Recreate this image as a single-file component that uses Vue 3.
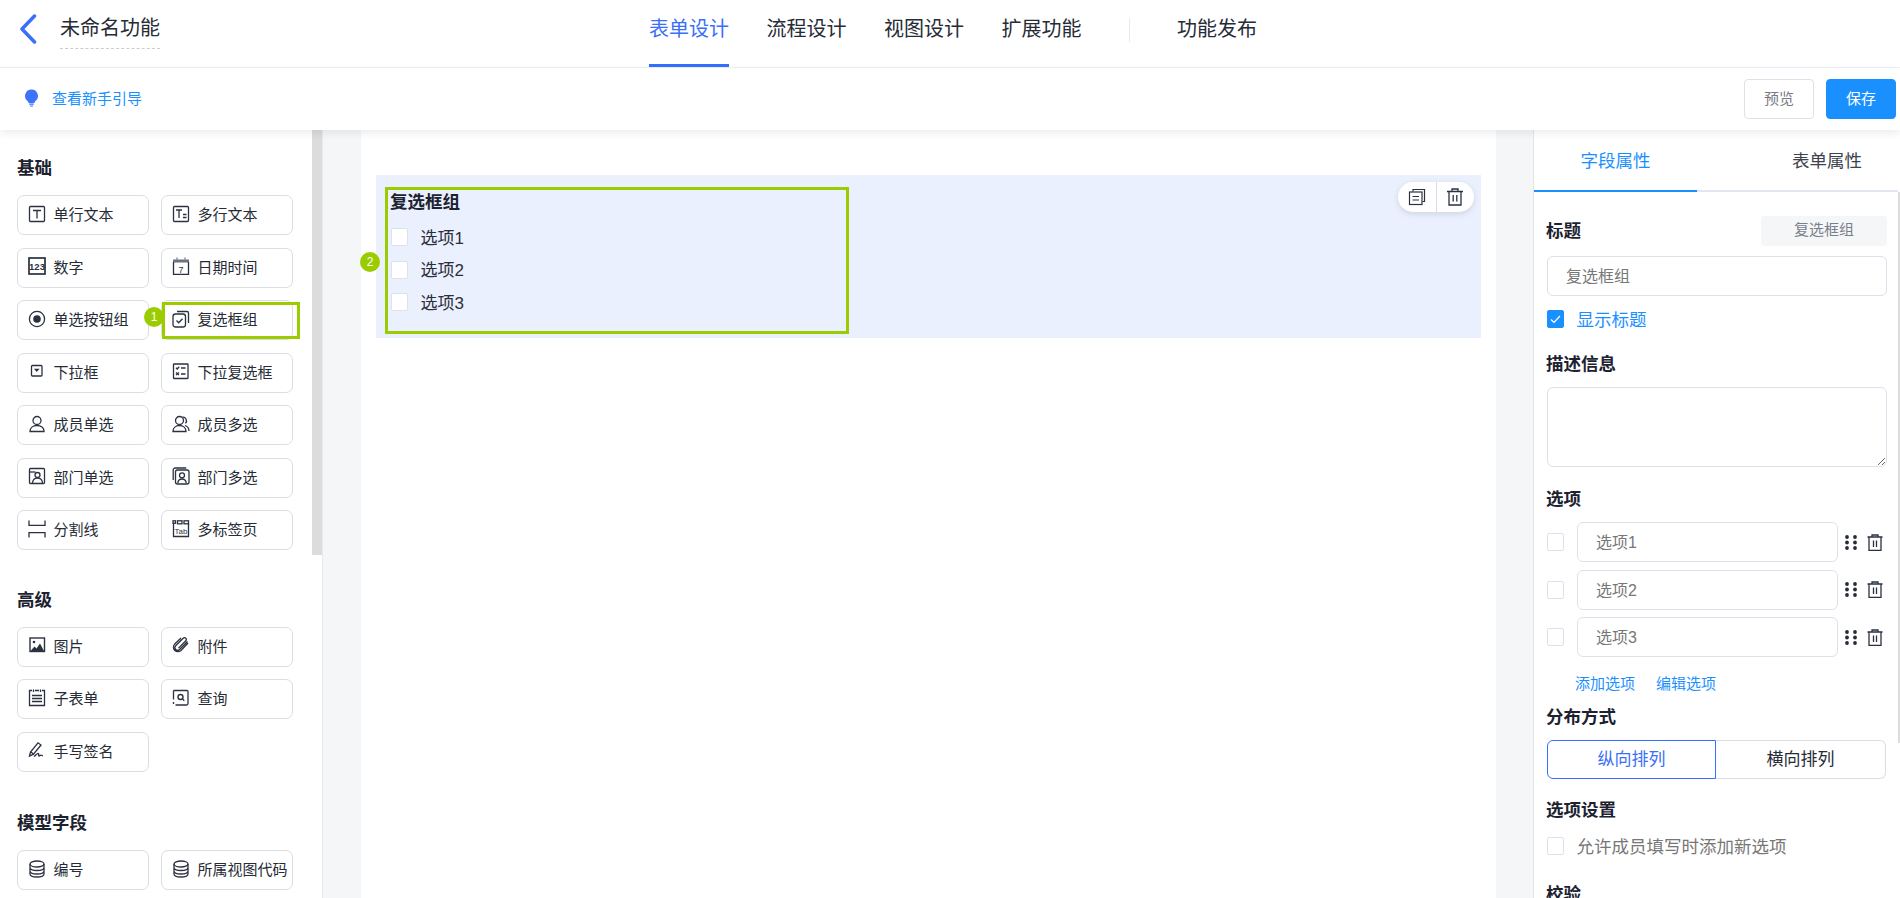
<script setup>
const S = 'fill="none" stroke="#2b3140" stroke-width="1.3"'
const icons = {
  single: `<g ${S}><rect x="1.5" y="1.5" width="15" height="15" rx="1"/><path d="M5 5.5h8M9 5.5v8"/></g>`,
  multi: `<g ${S}><rect x="1.5" y="1.5" width="15" height="15" rx="1"/><path d="M4 5h6M7 5v8M11 9.5h3.5M11 12.5h3.5"/></g>`,
  num: `<rect x="1" y="1" width="16" height="16" fill="none" stroke="#2b3140" stroke-width="1.7"/><text x="9" y="12.6" text-anchor="middle" font-family="Liberation Sans" font-weight="700" font-size="9.5" fill="#2b3140">123</text>`,
  date: `<rect x="1" y="2.5" width="16" height="3" fill="#6b7280"/><path d="M5 .5v2M13 .5v2" stroke="#6b7280" stroke-width="1.2"/><path d="M1.5 5v12.5h15V5" ${S}/><text x="9" y="15.5" text-anchor="middle" font-family="Liberation Sans" font-size="9" fill="#2b3140">7</text>`,
  radio: `<circle cx="9" cy="9" r="7.6" ${S}/><circle cx="9" cy="9" r="3.8" fill="#2b3140"/>`,
  check: `<g ${S}><path d="M5 1.5h10a1.5 1.5 0 0 1 1.5 1.5v10"/><rect x="1" y="4" width="12.5" height="13" rx="2.5"/><path d="M4.5 10.5l2.2 2.2 3.8-4"/></g>`,
  select: `<rect x="3.5" y="3.5" width="10.5" height="10.5" rx="1" ${S}/><path d="M6 6.800h5.600l-2.800 3.200z" fill="#2b3140"/>`,
  mselect: `<g ${S}><rect x="1.5" y="2" width="14.5" height="14.5" rx=".5"/><path d="M4 5.800l1.200 1.200 2-2.200M9 6h4.500M4 10.500l3 2.500M7 10.500l-3 2.500M9 12h4.500"/></g>`,
  user: `<g ${S}><circle cx="9" cy="5.500" r="4"/><path d="M2 16.500c0-3.600 3-6 7-6s7 2.400 7 5.300v.7z"/></g>`,
  users: `<g ${S}><circle cx="7.500" cy="5.500" r="4"/><path d="M1 16.500c0-3.600 2.800-6 6.500-6s6.500 2.400 6.500 6z"/><path d="M10.500 1.800a4 4 0 0 1 3 6.600M13 10.500c2.500 .8 4 2.800 4 5.500"/></g>`,
  dept: `<g ${S}><rect x="1.500" y="1.500" width="15" height="15" rx="1"/><path d="M1.500 5h6"/><circle cx="9.500" cy="8" r="2.500"/><path d="M4.500 16c.3-3 2.300-4.800 5-4.800s4.700 1.800 5 4.800"/></g>`,
  depts: `<g ${S}><path d="M1.200 13V3a2 2 0 0 1 2-2h11"/><rect x="3.500" y="3" width="13.500" height="14" rx="2"/><circle cx="10" cy="8.300" r="2.500"/><path d="M5.800 16c.3-2.500 2-4 4.200-4s3.900 1.500 4.200 4"/></g>`,
  line: `<path d="M1 .5v4.800h16V.5M1 17.500v-4.800h16v4.800" ${S}/>`,
  tab: `<g ${S}><path d="M1.500 3v13.500h15V3"/><rect x="1" y=".8" width="2.500" height="2.500"/><rect x="5.500" y=".8" width="4.500" height="3"/><rect x="12" y=".8" width="4.500" height="3"/></g><text x="9" y="13.500" text-anchor="middle" font-family="Liberation Sans" font-size="8" fill="#2b3140">Tab</text>`,
  image: `<rect x="2" y="2" width="14.500" height="13.500" fill="none" stroke="#2b3140" stroke-width="1.400"/><circle cx="6" cy="6" r="1.300" fill="#2b3140"/><path d="M2.500 15l4-4.500 2 2 3.500-5 4 7.500z" fill="#2b3140"/>`,
  clip: `<path d="M15.500 5.500l-8 8a2.600 2.600 0 0 1-3.800-3.800l7.500-7.500a1.800 1.800 0 0 1 2.600 2.600l-7.300 7.300M16 7l-7 7.500a4.500 4.500 0 0 1-6.500-6.200L9 2" ${S}/>`,
  sub: `<g ${S}><path d="M4 1.500H1.500v15h15v-15H14M7 1.500h4"/><path d="M4 6.500h10M4 9.500h10M4 12.500h10" stroke-width="1.400"/><path d="M5.500 .5v2.500M12.500 .5v2.500"/></g>`,
  query: `<g ${S}><path d="M1.500 1.500h13.500a1 1 0 0 1 1 1v12a1.500 1.500 0 0 1-1.500 1.500H3.500M1.500 1.500v9M1.500 13v2"/><circle cx="8.500" cy="8" r="2.500" stroke-width="1.400"/><path d="M10.500 10l1.800 1.800"/></g>`,
  sign: `<g ${S}><path d="M1.500 15l1-4L10 1.800l3 2.200-7.500 9.200z"/><path d="M3 11l2.500 2M6 15.500c2-1.500 3.500-3.500 4.500-3 .8.400-.5 2.200.3 2.500s1.500-1 2.500-.8c.7.100.8.600 1.700.6"/></g>`,
  db: `<g ${S}><ellipse cx="9" cy="4" rx="7" ry="3"/><path d="M2 4v10c0 1.700 3 3 7 3s7-1.300 7-3V4M2 7.500c0 1.700 3 3 7 3s7-1.300 7-3M2 11c0 1.700 3 3 7 3s7-1.300 7-3"/></g>`
}
const sections = [
  { title: '基础', items: [
    ['single', '单行文本'], ['multi', '多行文本'], ['num', '数字'], ['date', '日期时间'],
    ['radio', '单选按钮组'], ['check', '复选框组'], ['select', '下拉框'], ['mselect', '下拉复选框'],
    ['user', '成员单选'], ['users', '成员多选'], ['dept', '部门单选'], ['depts', '部门多选'],
    ['line', '分割线'], ['tab', '多标签页']
  ] },
  { title: '高级', items: [
    ['image', '图片'], ['clip', '附件'], ['sub', '子表单'], ['query', '查询'], ['sign', '手写签名']
  ] },
  { title: '模型字段', items: [['db', '编号'], ['db', '所属视图代码']] }
]
const navs = ['流程设计', '视图设计', '扩展功能']
const options = ['选项1', '选项2', '选项3']
</script>

<template>
  <div class="app">
    <header class="top">
      <div class="brand">
        <svg class="back" width="18" height="30" viewBox="0 0 18 30"><path d="M15.500 2L3 15l12.500 13" fill="none" stroke="#3a6ff7" stroke-width="3.500" stroke-linecap="round" stroke-linejoin="round"/></svg>
        <span class="name">未命名功能</span>
      </div>
      <nav class="nav">
        <a class="nav-item on">表单设计</a>
        <a v-for="n in navs" :key="n" class="nav-item">{{ n }}</a>
        <i class="nav-sep"></i>
        <a class="nav-item">功能发布</a>
      </nav>
    </header>

    <div class="sub">
      <div class="guide">
        <svg width="15" height="18" viewBox="0 0 15 18"><path d="M7.500 .5a6.500 6.500 0 0 1 4 11.600c-.7.600-1 1.100-1.100 1.900H4.600c-.1-.8-.4-1.300-1.100-1.900A6.500 6.500 0 0 1 7.500 .5z" fill="#3d74fb"/><path d="M5.200 15.200h4.600M6 17h3" stroke="#3d74fb" stroke-width="1.200"/></svg>
        <span>查看新手引导</span>
      </div>
      <div class="actions">
        <button class="btn">预览</button>
        <button class="btn primary">保存</button>
      </div>
    </div>

    <main class="body">
      <aside class="left">
        <div class="left-inner">
          <section v-for="s in sections" :key="s.title" class="group">
            <h3 class="h">{{ s.title }}</h3>
            <div class="grid">
              <div v-for="it in s.items" :key="it[1]" class="item">
                <svg class="ico" width="18" height="18" viewBox="0 0 18 18" v-html="icons[it[0]]"></svg>
                <span>{{ it[1] }}</span>
                <template v-if="it[1] === '复选框组'">
                  <i class="mark-box"></i>
                  <b class="badge badge-one">1</b>
                </template>
              </div>
            </div>
          </section>
        </div>
        <div class="track"><div class="thumb"></div></div>
      </aside>

      <section class="center">
        <div class="canvas">
          <div class="field">
            <div class="field-title">复选框组</div>
            <label v-for="o in options" :key="o" class="opt">
              <i class="box"></i><span class="opt-text">{{ o }}</span>
            </label>
            <div class="tools">
              <button class="tool">
                <svg width="18" height="18" viewBox="0 0 18 18" fill="none" stroke="#2b3140" stroke-width="1.200"><path d="M5 3.500V1.500h11.500v12h-2"/><rect x="1.500" y="4" width="12.500" height="12.500"/><path d="M4.500 8.500h6.500M4.500 12h6.500"/></svg>
              </button>
              <button class="tool">
                <svg width="18" height="18" viewBox="0 0 18 18" fill="none" stroke="#2b3140" stroke-width="1.300"><path d="M1 3.500h16M6 3.500V1h6v2.500M3 3.500v13.500h12V3.500M7.200 7v6.500M10.800 7v6.500"/></svg>
              </button>
            </div>
            <i class="mark-field"></i>
            <b class="badge badge-two">2</b>
          </div>
        </div>
      </section>

      <aside class="right">
        <div class="right-main">
          <div class="tabs">
            <div class="tab on">字段属性</div>
            <div class="tab">表单属性</div>
          </div>
          <div class="form">
            <div class="row-head">
              <h4 class="label">标题</h4>
              <span class="tag">复选框组</span>
            </div>
            <input class="input title-input" value="复选框组" readonly />
            <div class="show">
              <span class="cb checked">
                <svg width="11" height="9" viewBox="0 0 11 9"><path d="M1 4.500l3 3 6-6.500" fill="none" stroke="#fff" stroke-width="1.200"/></svg>
              </span>
              <span class="show-text">显示标题</span>
            </div>
            <h4 class="label desc">描述信息</h4>
            <textarea class="area" readonly></textarea>
            <h4 class="label opts">选项</h4>
            <div class="rows">
              <div v-for="o in options" :key="o" class="opt-row">
                <span class="cb"></span>
                <input class="input" :value="o" readonly />
                <svg class="dots" width="12" height="15" viewBox="0 0 12 15" fill="#262b36"><circle cx="2" cy="2" r="1.900"/><circle cx="10" cy="2" r="1.900"/><circle cx="2" cy="7.500" r="1.900"/><circle cx="10" cy="7.500" r="1.900"/><circle cx="2" cy="13" r="1.900"/><circle cx="10" cy="13" r="1.900"/></svg>
                <svg width="16" height="17" viewBox="0 0 16 17" fill="none" stroke="#2b3140" stroke-width="1.300"><path d="M.5 3h15M5 3V1h6v2M2 3v13.500h12V3M6.500 6.500v6.500M9.500 6.500v6.500"/></svg>
              </div>
            </div>
            <div class="links"><a>添加选项</a><a>编辑选项</a></div>
            <h4 class="label dist">分布方式</h4>
            <div class="seg">
              <div class="seg-item on">纵向排列</div>
              <div class="seg-item">横向排列</div>
            </div>
            <h4 class="label set">选项设置</h4>
            <div class="allow"><span class="cb"></span><span class="show-text">允许成员填写时添加新选项</span></div>
            <h4 class="label verify">校验</h4>
          </div>
        </div>
        <div class="r-track"><div class="r-thumb"></div></div>
      </aside>
    </main>
  </div>
</template>

<style scoped>
.app { width: 1900px; height: 898px; overflow: hidden; background: #fff; font-family: "Liberation Sans", "Noto Sans CJK SC", sans-serif; color: #262b36; display: flex; flex-direction: column; }
.top { height: 68px; box-sizing: border-box; border-bottom: 1px solid #f0f1f4; display: flex; align-items: flex-start; position: relative; }
.brand { display: flex; align-items: flex-start; padding: 14px 0 0 19px; }
.name { margin-left: 23px; font-size: 20px; line-height: 28px; padding-bottom: 6px; border-bottom: 1px dashed #c9ccd2; color: #262b36; }
.nav { display: flex; align-items: flex-start; margin-left: 489px; height: 67px; }
.nav-item { font-size: 20px; line-height: 28px; padding-top: 15px; height: 64px; box-sizing: border-box; margin-right: 37.500px; color: #262b36; }
.nav-item.on { color: #3a6ff7; border-bottom: 3px solid #3370ff; height: 67px; }
.nav-sep { width: 1px; height: 24px; margin: 18px 47px 0 10px; background: #e8e9ec; }
.sub { height: 62px; flex: none; display: flex; align-items: center; justify-content: space-between; box-shadow: 0 3px 8px rgba(0, 0, 0, .08); position: relative; z-index: 2; background: #fff; }
.guide { display: flex; align-items: center; gap: 13px; padding: 0 0 3px 24px; font-size: 15px; color: #1a90ff; }
.actions { display: flex; gap: 12px; padding-right: 4px; }
.btn { width: 70px; height: 40px; border-radius: 4px; border: 1px solid #dfe1ea; background: #fff; color: #777b84; font: 15px "Liberation Sans", "Noto Sans CJK SC", sans-serif; padding: 0 0 3px; }
.btn.primary { background: #1a90ff; border-color: #1a90ff; color: #fff; }
.body { flex: 1; min-height: 0; display: flex; }
.left { width: 323px; flex: none; display: flex; box-sizing: border-box; border-right: 1px solid #e8e9ec; overflow: hidden; }
.left-inner { width: 312px; box-sizing: border-box; padding: 26px 0 0 17px; flex: none; }
.group { margin-bottom: 37.500px; }
.group + .group { margin-bottom: 39.500px; }
.h { margin: 0 0 15px; font-size: 17.500px; line-height: 24px; font-weight: 700; color: #1c2230; }
.grid { display: grid; grid-template-columns: 132px 132px; column-gap: 12px; row-gap: 12.500px; grid-auto-rows: 40px; }
.item { position: relative; border: 1px solid #dcdde2; border-radius: 7px; box-sizing: border-box; display: flex; align-items: center; padding: 0 0 3px 10px; font-size: 15px; color: #262b36; white-space: nowrap; }
.ico { margin-right: 7.500px; flex: none; }
.track { width: 10px; flex: none; background: #fff; }
.thumb { height: 425px; background: #dcdcdc; }
.mark-box { position: absolute; left: 0; top: 1px; width: 138px; height: 37px; box-sizing: border-box; border: 3px solid #9bcc00; }
.badge { position: absolute; width: 20px; height: 20px; border-radius: 50%; background: #9bcc00; color: #fff; font-size: 12px; font-weight: 400; line-height: 20px; text-align: center; font-style: normal; }
.badge-one { left: -18px; top: 6px; }
.center { flex: 1; min-width: 0; background: #f5f6f8; padding: 0 37px 0 38px; }
.canvas { height: 100%; background: #fff; padding: 45px 15px 0; box-sizing: border-box; }
.field { position: relative; height: 163px; background: #eaf0fd; box-sizing: border-box; padding: 15px 0 0 15px; }
.field-title { font-size: 17.500px; font-weight: 700; line-height: 25px; color: #1c2230; margin-bottom: 13px; margin-left: -1px; }
.opt { display: flex; align-items: center; height: 18px; margin-bottom: 14.500px; font-size: 17px; color: #2a2f3b; }
.opt-text { margin-top: -2px; }
.box { width: 17px; height: 18px; box-sizing: border-box; background: #fff; border: 1px solid #dfe1ea; border-radius: 2px; margin-right: 12.500px; }
.tools { position: absolute; top: 7px; right: 7px; width: 76px; height: 30px; border-radius: 15px; background: #fff; box-shadow: 0 2px 6px rgba(0, 0, 0, .12); display: flex; }
.tool { flex: 1; border: 0; background: none; padding: 0; display: flex; align-items: center; justify-content: center; }
.tool + .tool { border-left: 1px solid #dcdde2; }
.mark-field { position: absolute; left: 9px; top: 12px; width: 464px; height: 147px; box-sizing: border-box; border: 3px solid #9bcc00; }
.badge-two { left: -16px; top: 77px; }
.right { width: 367px; flex: none; display: flex; box-sizing: border-box; border-left: 1px solid #e4e5e9; overflow: hidden; background: #fff; }
.right-main { width: 364px; flex: none; overflow: hidden; }
.tabs { display: flex; height: 62px; box-sizing: border-box; border-bottom: 2px solid #e2e6f2; width: 366px; }
.tab { flex: none; width: 260px; text-align: center; font-size: 17.500px; line-height: 62px; height: 62px; box-sizing: border-box; color: #3d424e; }
.tab.on { width: 163px; color: #1a90ff; border-bottom: 2px solid #1a90ff; }
.form { padding: 24px 0 0 13px; }
.row-head { display: flex; align-items: center; justify-content: space-between; height: 30px; width: 340px; }
.label { margin: 0 0 0 -1px; font-size: 17.500px; line-height: 24px; font-weight: 700; color: #1c2230; }
.tag { width: 126px; height: 30px; line-height: 28px; background: #f5f6f8; border-radius: 3px; text-align: center; font-size: 15px; color: #7a7f8c; }
.input { display: block; box-sizing: border-box; height: 40px; border: 1px solid #dfe1ea; border-radius: 6px; padding: 0 15px 2px; font: 16px "Liberation Sans", "Noto Sans CJK SC", sans-serif; color: #777; outline: 0; background: #fff; min-width: 0; }
.title-input { width: 340px; height: 40px; margin-top: 10px; padding-left: 18px; }
.show { display: flex; align-items: center; height: 18px; margin-top: 14px; font-size: 17.500px; color: #1a90ff; gap: 12.500px; }
.show-text { margin-top: -2px; }
.cb { width: 17px; height: 18px; box-sizing: border-box; flex: none; border: 1px solid #dfe1ea; border-radius: 2px; background: #fff; display: flex; align-items: center; justify-content: center; }
.cb.checked { background: #1a90ff; border-color: #1a90ff; }
.desc { margin-top: 24px; }
.area { display: block; width: 340px; height: 80px; box-sizing: border-box; margin-top: 11px; border: 1px solid #dfe1ea; border-radius: 6px; outline: 0; resize: vertical; background: #fff; }
.opts { margin-top: 20px; }
.rows { margin-top: 11px; display: flex; flex-direction: column; gap: 7.500px; }
.opt-row { display: flex; align-items: center; height: 40px; }
.opt-row .input { width: 261px; margin-left: 13px; margin-right: 7px; padding-left: 18px; }
.dots { margin-right: 10px; }
.links { display: flex; gap: 21px; margin-top: 17px; padding-left: 28px; font-size: 15px; line-height: 20px; color: #1a90ff; }
.dist { margin-top: 11px; }
.seg { display: flex; width: 339px; height: 39px; margin-top: 11px; font-size: 17px; text-align: center; line-height: 37px; }
.seg-item { flex: 1; box-sizing: border-box; border: 1px solid #dcdde2; border-left: 0; border-radius: 0 6px 6px 0; color: #262b36; }
.seg-item.on { flex: 0 0 169px; border: 1px solid #3370ff; border-radius: 6px 0 0 6px; color: #3a6ff7; }
.set { margin-top: 19px; }
.allow { display: flex; align-items: center; height: 18px; gap: 12.500px; margin-top: 15px; font-size: 17.500px; color: #777; }
.verify { margin-top: 27px; }
.r-track { width: 2px; flex: none; padding-top: 62px; }
.r-thumb { height: 551px; background: #dcdcdc; }
</style>

<style>
html, body { margin: 0; background: #fff; }
</style>
